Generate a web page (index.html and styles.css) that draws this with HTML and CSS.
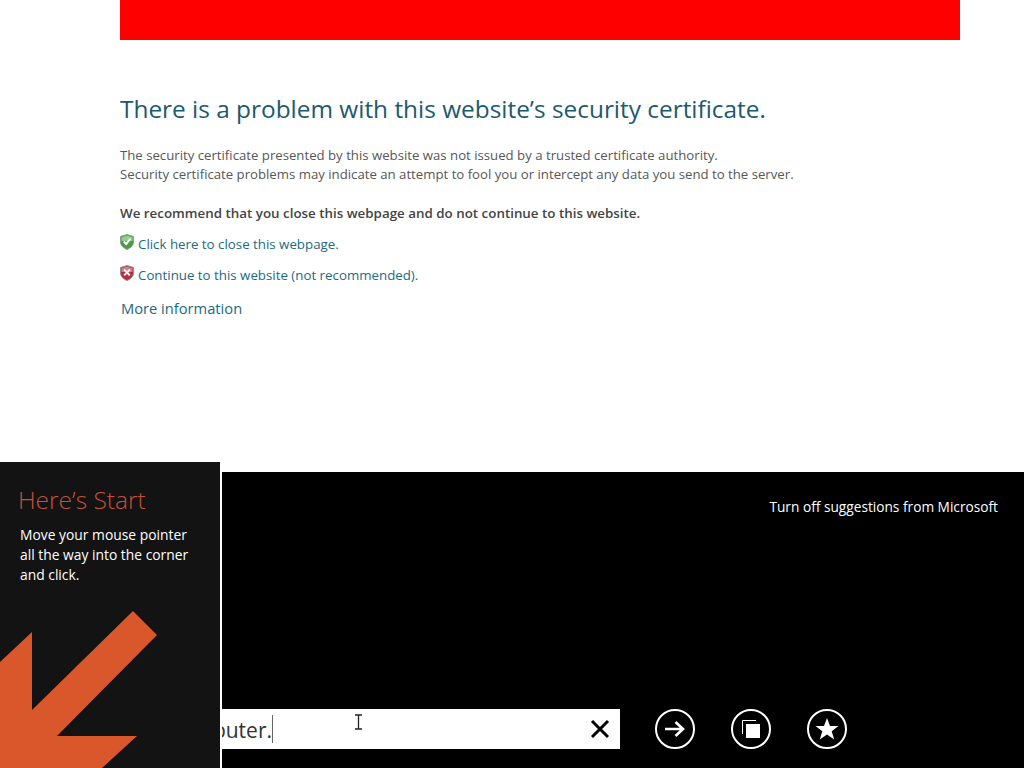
FILE: index.html
```html
<!DOCTYPE html>
<html>
<head>
	<meta charset="utf-8">
	<meta name="viewport" content="width=device-width, initial-scale=1">
	<title>Certificate error</title>
	<link rel="stylesheet" href="styles.css">
</head>
<body>
	<div class="page">
		<div class="redbar"></div>
		<h1 class="title">There is a problem with this website’s security certificate.</h1>
		<p class="desc">The security certificate presented by this website was not issued by a trusted certificate authority.<br>Security certificate problems may indicate an attempt to fool you or intercept any data you send to the server.</p>
		<p class="recommend">We recommend that you close this webpage and do not continue to this website.</p>
		<div class="option">
			<svg class="shield" viewBox="0 0 14 16" width="14" height="16">
				<path d="M7 .5 13.500 2.500V8C13.500 11.500 10.500 14 7 15.500 3.500 14 .5 11.500 .5 8V2.500Z" fill="#4c9a4a" stroke="#8f9c90"/>
				<path d="M7 1.500 12.500 3.200V7H1.500V3.200Z" fill="#8fd08a"/>
				<path d="M3.800 7.500 6.200 10 10.400 4.600" fill="none" stroke="#fff" stroke-width="2"/>
			</svg>
			<a class="link">Click here to close this webpage.</a>
		</div>
		<div class="option">
			<svg class="shield" viewBox="0 0 14 16" width="14" height="16">
				<path d="M7 .5 13.500 2.500V8C13.500 11.500 10.500 14 7 15.500 3.500 14 .5 11.500 .5 8V2.500Z" fill="#b5303f" stroke="#9a8a8c"/>
				<path d="M7 1.500 12.500 3.200V7H1.500V3.200Z" fill="#d8808a"/>
				<path d="M4.200 4.600 9.800 10.400M9.800 4.600 4.200 10.400" fill="none" stroke="#fff" stroke-width="2"/>
			</svg>
			<a class="link">Continue to this website (not recommended).</a>
		</div>
		<a class="more">More information</a>
	</div>

	<div class="bottom">
		<div class="tip">
			<div class="tip-title">Here’s Start</div>
			<div class="tip-text">Move your mouse pointer<br>all the way into the corner<br>and click.</div>
			<svg class="tip-arrow" viewBox="0 0 220 306" width="220" height="306">
				<path d="M133 149 157 173 57 274H137L102 306H0V200L32 170V248Z" fill="#d9572b"/>
			</svg>
		</div>
		<div class="charm">
			<div class="charm-top">Turn off suggestions from Microsoft</div>
			<div class="charm-row">
				<div class="searchbox">
					<div class="searchtext"><span>computer.</span></div>
					<div class="caret"></div>
					<svg class="ibeam" viewBox="0 0 9 16" width="9" height="16">
						<path d="M1 1H8M4.500 1V15M1 15H8" fill="none" stroke="#222" stroke-width="1.300"/>
					</svg>
					<svg class="clear" viewBox="0 0 20 20" width="20" height="20">
						<path d="M2 2 18 18M18 2 2 18" fill="none" stroke="#000" stroke-width="3"/>
					</svg>
				</div>
				<div class="round">
					<svg viewBox="0 0 22 20" width="22" height="20">
						<path d="M1 10H19M11.500 3 19 10 11.500 17" fill="none" stroke="#fff" stroke-width="2.600"/>
					</svg>
				</div>
				<div class="round">
					<svg viewBox="0 0 18 18" width="18" height="18">
						<path d="M.5 14V.5H14" fill="none" stroke="#fff" stroke-width="1"/>
						<rect x="4" y="4" width="14" height="14" fill="#fff"/>
					</svg>
				</div>
				<div class="round">
					<svg viewBox="0 0 24 24" width="24" height="24">
						<path d="M12 1 15 9H23.500L16.700 14.200 19.200 22.500 12 17.500 4.800 22.500 7.300 14.200 .5 9H9Z" fill="#fff"/>
					</svg>
				</div>
			</div>
		</div>
	</div>
</body>
</html>
```

FILE: styles.css
```css
html, body {
	margin: 0;
	padding: 0;
}
body {
	width: 1024px;
	height: 768px;
	overflow: hidden;
	background: #fff;
	font-family: "Open Sans", "Noto Sans", sans-serif;
}

.page {
	height: 462px;
	padding-left: 120px;
	box-sizing: border-box;
}
.redbar {
	width: 840px;
	height: 40px;
	background: #ff0000;
}
.title {
	margin: 50px 0 0 0;
	font-size: 24.400px;
	line-height: 38px;
	font-weight: 400;
	color: #1c5a6e;
	white-space: nowrap;
}
.desc {
	margin: 18px 0 0 0;
	font-size: 13.200px;
	line-height: 19px;
	color: #575757;
	white-space: nowrap;
}
.recommend {
	margin: 20px 0 0 0;
	font-size: 13.370px;
	line-height: 19px;
	font-weight: 600;
	color: #444;
	white-space: nowrap;
}
.option {
	display: flex;
	align-items: flex-start;
	gap: 4px;
	margin-top: 12px;
	height: 19px;
}
.shield {
	flex: none;
	margin-top: -1px;
}
.link {
	font-size: 13.300px;
	line-height: 19px;
	color: #1c6a80;
}
.more {
	display: block;
	margin: 12px 0 0 1px;
	font-size: 14.700px;
	line-height: 22px;
	color: #1c6a80;
}

.bottom {
	display: flex;
	align-items: flex-end;
	gap: 2px;
	height: 306px;
}
.tip {
	position: relative;
	flex: none;
	width: 220px;
	height: 306px;
	background: #131313;
	overflow: hidden;
}
.tip-title {
	margin: 21px 0 0 18px;
	font-size: 24.500px;
	line-height: 34px;
	font-weight: 300;
	color: #c8503a;
}
.tip-text {
	margin: 8px 0 0 20px;
	font-size: 13.850px;
	line-height: 20px;
	color: #fff;
}
.tip-arrow {
	position: absolute;
	left: 0;
	top: 0;
}

.charm {
	flex: 1;
	height: 296px;
	background: #000;
	display: flex;
	flex-direction: column;
	justify-content: space-between;
}
.charm-top {
	margin-top: 25px;
	padding-right: 26px;
	text-align: right;
	font-size: 13.700px;
	line-height: 20px;
	color: #fff;
}
.charm-row {
	display: flex;
	align-items: center;
	gap: 36px;
	margin-bottom: 19px;
}
.searchbox {
	position: relative;
	width: 398px;
	height: 40px;
	margin-right: -1px;
	background: #fff;
}
.searchtext {
	display: flex;
	justify-content: flex-end;
	width: 50px;
	overflow: hidden;
	font-size: 21px;
	line-height: 43px;
	color: #333;
	white-space: nowrap;
}
.caret {
	position: absolute;
	left: 50px;
	top: 6px;
	width: 1px;
	height: 28px;
	background: #666;
}
.ibeam {
	position: absolute;
	left: 132px;
	top: 5px;
}
.clear {
	position: absolute;
	left: 368px;
	top: 10px;
}
.round {
	flex: none;
	width: 40px;
	height: 40px;
	box-sizing: border-box;
	border: 2.500px solid #fff;
	border-radius: 50%;
	display: flex;
	align-items: center;
	justify-content: center;
}
```
